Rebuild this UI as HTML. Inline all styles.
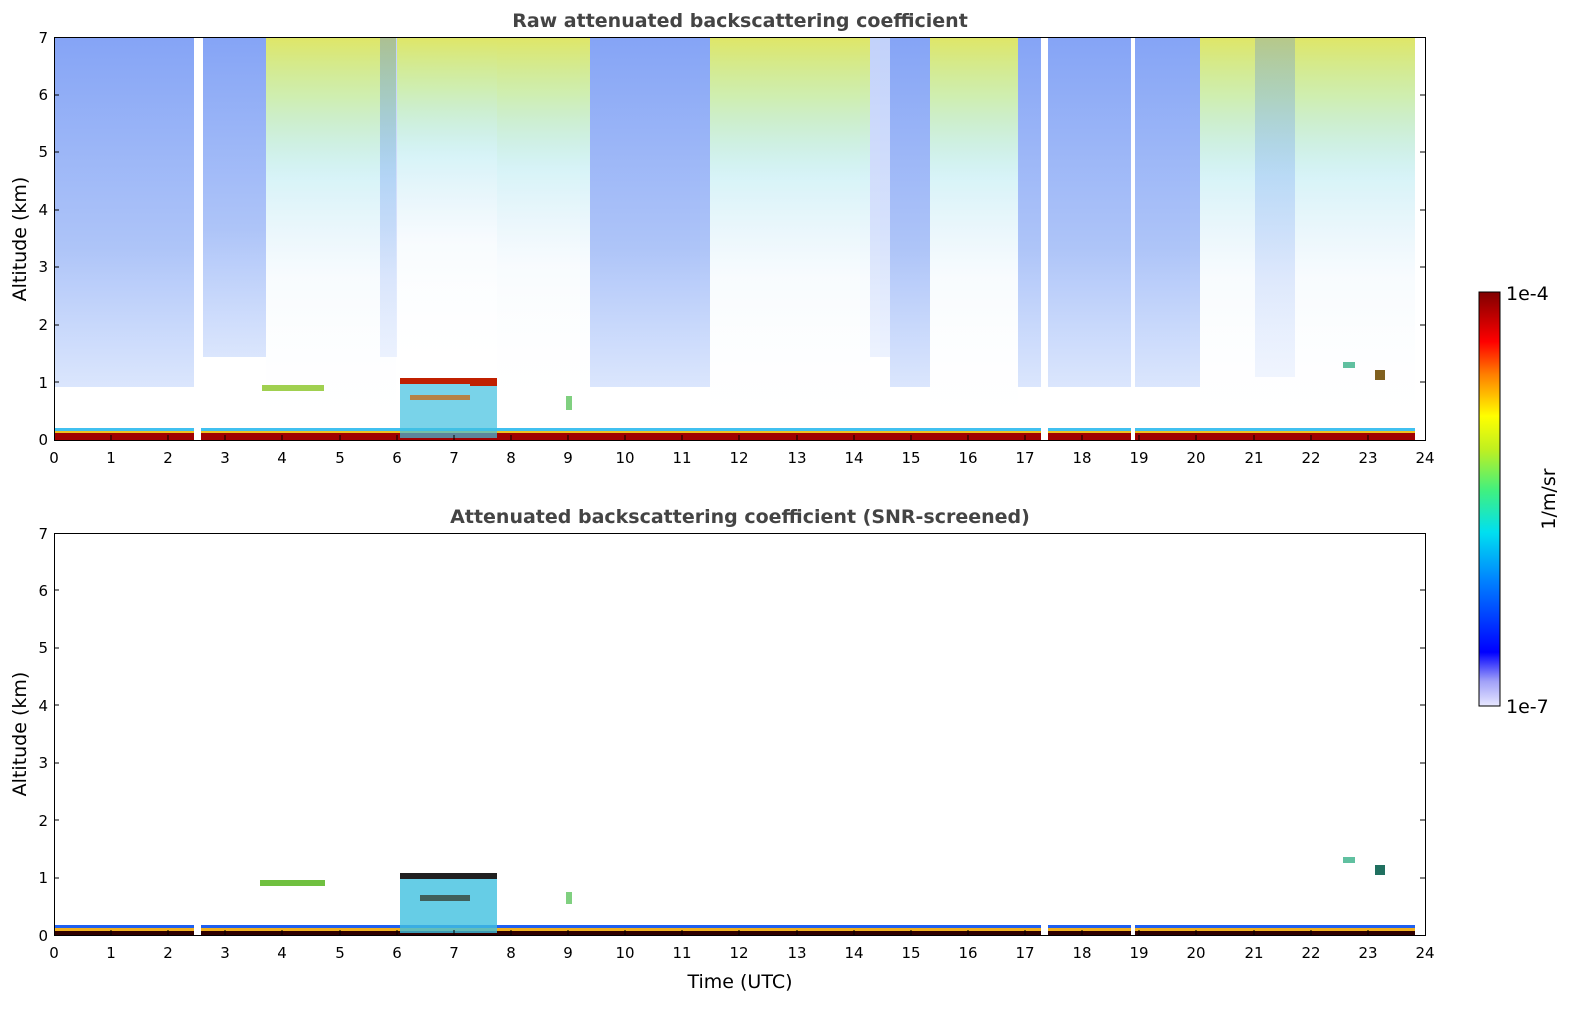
<!DOCTYPE html>
<html><head><meta charset="utf-8"><style>
html,body{margin:0;padding:0;background:#fff;width:1595px;height:1020px;overflow:hidden}
text{font-family:"DejaVu Sans","Liberation Sans",sans-serif}
</style></head><body>
<svg width="1595" height="1020" viewBox="0 0 1595 1020" xmlns="http://www.w3.org/2000/svg">
<defs>
<linearGradient id="blu" x1="0" y1="0" x2="0" y2="1">
<stop offset="0" stop-color="#3a6cf0" stop-opacity="0.62"/>
<stop offset="0.6" stop-color="#4a7cf0" stop-opacity="0.45"/>
<stop offset="1" stop-color="#5a8cf5" stop-opacity="0.22"/>
</linearGradient>
<linearGradient id="yel" x1="0" y1="0" x2="0" y2="1">
<stop offset="0" stop-color="#d8e040" stop-opacity="0.8"/>
<stop offset="0.15" stop-color="#a8e070" stop-opacity="0.55"/>
<stop offset="0.35" stop-color="#60d0e0" stop-opacity="0.25"/>
<stop offset="0.6" stop-color="#80c0f0" stop-opacity="0.06"/>
<stop offset="1" stop-color="#ffffff" stop-opacity="0"/>
</linearGradient>
<linearGradient id="jet" x1="0" y1="1" x2="0" y2="0">
<stop offset="0" stop-color="#e8e8ff"/>
<stop offset="0.06" stop-color="#a0a0f8"/>
<stop offset="0.13" stop-color="#0000ff"/>
<stop offset="0.3" stop-color="#0080ff"/>
<stop offset="0.42" stop-color="#00e0f0"/>
<stop offset="0.52" stop-color="#40f080"/>
<stop offset="0.62" stop-color="#c0f020"/>
<stop offset="0.7" stop-color="#ffff00"/>
<stop offset="0.8" stop-color="#ff8000"/>
<stop offset="0.88" stop-color="#ff0000"/>
<stop offset="1" stop-color="#800000"/>
</linearGradient>
</defs>

<g>
<rect x="54" y="37" width="140" height="350" fill="url(#blu)"/>
<rect x="203" y="37" width="63" height="320" fill="url(#blu)"/>
<rect x="266" y="37" width="130" height="400" fill="url(#yel)"/>
<rect x="380" y="37" width="17" height="320" fill="url(#blu)" opacity="0.5"/>
<rect x="397" y="37" width="100" height="340" fill="url(#yel)"/>
<rect x="497" y="37" width="93" height="380" fill="url(#yel)"/>
<rect x="590" y="37" width="120" height="350" fill="url(#blu)"/>
<rect x="710" y="37" width="160" height="400" fill="url(#yel)"/>
<rect x="870" y="37" width="20" height="320" fill="url(#blu)" opacity="0.5"/>
<rect x="890" y="37" width="40" height="350" fill="url(#blu)"/>
<rect x="930" y="37" width="88" height="400" fill="url(#yel)"/>
<rect x="1018" y="37" width="182" height="350" fill="url(#blu)"/>
<rect x="1200" y="37" width="215" height="400" fill="url(#yel)"/>
<rect x="1255" y="37" width="40" height="340" fill="url(#blu)" opacity="0.4"/>
<rect x="194" y="37" width="7" height="403" fill="#fff"/>
<rect x="1041" y="37" width="7" height="403" fill="#fff"/>
<rect x="1131" y="37" width="4" height="403" fill="#fff"/>
<rect x="1415" y="37" width="10" height="403" fill="#fff"/>
<rect x="54" y="428" width="1361" height="3" fill="#40c0f0"/>
<rect x="54" y="431" width="1361" height="2" fill="#f0c020"/>
<rect x="54" y="433" width="1361" height="7" fill="#a00000"/>
<rect x="194" y="426" width="7" height="14" fill="#fff"/>
<rect x="1041" y="426" width="7" height="14" fill="#fff"/>
<rect x="1131" y="426" width="4" height="14" fill="#fff"/>
<rect x="400" y="378" width="97" height="60" fill="#40c0e0" opacity="0.7"/>
<rect x="400" y="378" width="97" height="6" fill="#c02000"/>
<rect x="470" y="378" width="27" height="8" fill="#c02000"/>
<rect x="410" y="395" width="60" height="5" fill="#d06000" opacity="0.7"/>
<rect x="262" y="385" width="62" height="6" fill="#a0d050"/>
<rect x="566" y="396" width="6" height="14" fill="#80d080"/>
<rect x="1343" y="362" width="12" height="6" fill="#60c0a0"/>
<rect x="1375" y="370" width="10" height="10" fill="#806020"/>
</g>

<g>
<rect x="54" y="925" width="1361" height="3" fill="#2060f0"/>
<rect x="54" y="928" width="1361" height="3" fill="#f0b020"/>
<rect x="54" y="931" width="1361" height="4" fill="#300000"/>
<rect x="194" y="924" width="7" height="11" fill="#fff"/>
<rect x="1041" y="924" width="7" height="11" fill="#fff"/>
<rect x="1131" y="924" width="4" height="11" fill="#fff"/>
<rect x="400" y="873" width="97" height="60" fill="#40c0e0" opacity="0.8"/>
<rect x="400" y="873" width="97" height="6" fill="#202020"/>
<rect x="420" y="895" width="50" height="6" fill="#303020" opacity="0.7"/>
<rect x="260" y="880" width="65" height="6" fill="#70c040"/>
<rect x="566" y="892" width="6" height="12" fill="#80d080"/>
<rect x="1343" y="857" width="12" height="6" fill="#60c0a0"/>
<rect x="1375" y="865" width="10" height="10" fill="#207060"/>
</g>

<rect x="54.5" y="37.5" width="1371" height="403" fill="none" stroke="#000" stroke-width="1"/>
<rect x="54.5" y="533.5" width="1371" height="402" fill="none" stroke="#000" stroke-width="1"/>

<g stroke="#000" stroke-width="1">
<path d="M111,440v-5M168,440v-5M225,440v-5M282,440v-5M340,440v-5M397,440v-5M454,440v-5M511,440v-5M568,440v-5M625,440v-5M682,440v-5M739,440v-5M797,440v-5M854,440v-5M911,440v-5M968,440v-5M1025,440v-5M1082,440v-5M1139,440v-5M1196,440v-5M1254,440v-5M1311,440v-5M1368,440v-5"/>
<path d="M111,935v-5M168,935v-5M225,935v-5M282,935v-5M340,935v-5M397,935v-5M454,935v-5M511,935v-5M568,935v-5M625,935v-5M682,935v-5M739,935v-5M797,935v-5M854,935v-5M911,935v-5M968,935v-5M1025,935v-5M1082,935v-5M1139,935v-5M1196,935v-5M1254,935v-5M1311,935v-5M1368,935v-5"/>
<path d="M54,382h5M54,325h5M54,267h5M54,210h5M54,152h5M54,95h5M1425,382h-5M1425,325h-5M1425,267h-5M1425,210h-5M1425,152h-5M1425,95h-5"/>
<path d="M54,878h5M54,820h5M54,763h5M54,705h5M54,648h5M54,590h5M1425,878h-5M1425,820h-5M1425,763h-5M1425,705h-5M1425,648h-5M1425,590h-5"/>
</g>

<text x="740" y="27" font-size="19" font-weight="bold" fill="#444" text-anchor="middle">Raw attenuated backscattering coefficient</text>
<text x="740" y="523" font-size="19" font-weight="bold" fill="#444" text-anchor="middle">Attenuated backscattering coefficient (SNR-screened)</text>

<g font-size="15" text-anchor="end">
<text x="48" y="445">0</text><text x="48" y="388">1</text><text x="48" y="330">2</text><text x="48" y="272">3</text><text x="48" y="215">4</text><text x="48" y="157">5</text><text x="48" y="100">6</text><text x="48" y="43">7</text>
<text x="48" y="941">0</text><text x="48" y="883">1</text><text x="48" y="826">2</text><text x="48" y="768">3</text><text x="48" y="711">4</text><text x="48" y="653">5</text><text x="48" y="596">6</text><text x="48" y="539">7</text>
</g>
<text transform="translate(26,239) rotate(-90)" font-size="19" text-anchor="middle">Altitude (km)</text>
<text transform="translate(26,734) rotate(-90)" font-size="19" text-anchor="middle">Altitude (km)</text>

<g font-size="15" text-anchor="middle">
<text x="54" y="463">0</text><text x="111" y="463">1</text><text x="168" y="463">2</text><text x="225" y="463">3</text><text x="282" y="463">4</text><text x="340" y="463">5</text><text x="397" y="463">6</text><text x="454" y="463">7</text><text x="511" y="463">8</text><text x="568" y="463">9</text><text x="625" y="463">10</text><text x="682" y="463">11</text><text x="739" y="463">12</text><text x="797" y="463">13</text><text x="854" y="463">14</text><text x="911" y="463">15</text><text x="968" y="463">16</text><text x="1025" y="463">17</text><text x="1082" y="463">18</text><text x="1139" y="463">19</text><text x="1196" y="463">20</text><text x="1254" y="463">21</text><text x="1311" y="463">22</text><text x="1368" y="463">23</text><text x="1425" y="463">24</text>
</g>
<g font-size="15" text-anchor="middle">
<text x="54" y="958">0</text><text x="111" y="958">1</text><text x="168" y="958">2</text><text x="225" y="958">3</text><text x="282" y="958">4</text><text x="340" y="958">5</text><text x="397" y="958">6</text><text x="454" y="958">7</text><text x="511" y="958">8</text><text x="568" y="958">9</text><text x="625" y="958">10</text><text x="682" y="958">11</text><text x="739" y="958">12</text><text x="797" y="958">13</text><text x="854" y="958">14</text><text x="911" y="958">15</text><text x="968" y="958">16</text><text x="1025" y="958">17</text><text x="1082" y="958">18</text><text x="1139" y="958">19</text><text x="1196" y="958">20</text><text x="1254" y="958">21</text><text x="1311" y="958">22</text><text x="1368" y="958">23</text><text x="1425" y="958">24</text>
</g>
<text x="740" y="988" font-size="19" text-anchor="middle">Time (UTC)</text>

<rect x="1479" y="292" width="21" height="414" fill="url(#jet)" stroke="#000" stroke-width="1"/>
<text x="1506" y="300" font-size="19">1e-4</text>
<text x="1506" y="713" font-size="19">1e-7</text>
<text transform="translate(1555,499) rotate(-90)" font-size="19" text-anchor="middle">1/m/sr</text>
</svg>
</body></html>
